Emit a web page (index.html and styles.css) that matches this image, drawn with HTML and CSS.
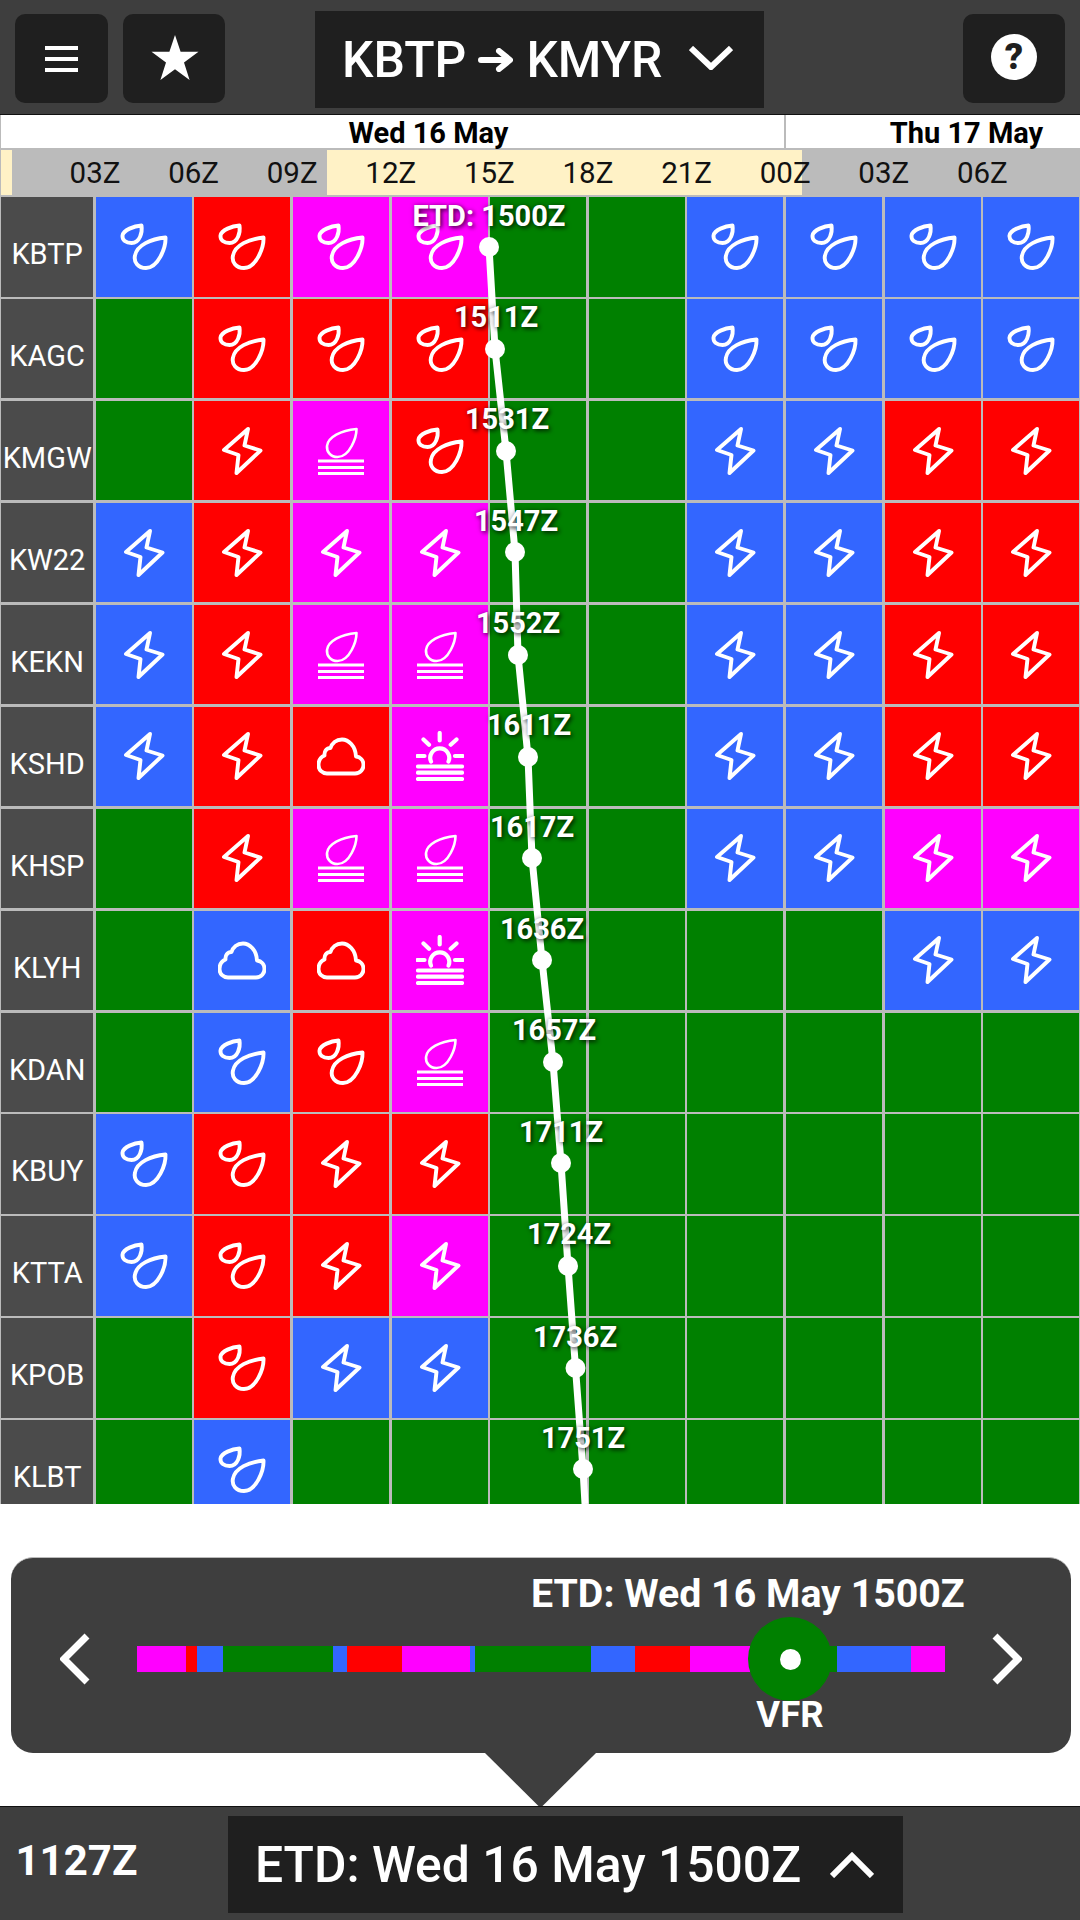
FILE: index.html
```html
<!DOCTYPE html>
<html lang="en">
<head>
<meta charset="utf-8">
<title>KBTP to KMYR</title>
<link rel="stylesheet" href="styles.css">
</head>
<body>
<svg class="defs" width="0" height="0" aria-hidden="true">
  <symbol id="rain" viewBox="0 0 48 48">
    <path class="ln" d="M45.5 14.5C46 25 38 45 26 45C18 45 13.5 39 15 32.5C17 22 31 16 45.5 14.5Z"/>
    <path class="ln" d="M21.5 2.5C22.5 9 20 20 11.5 20C6 20 2 17 2.5 12.5C3.5 7 14 3 21.5 2.5Z"/>
  </symbol>
  <symbol id="bolt" viewBox="0 0 48 48">
    <path class="ln" d="M30 2L6 23L20.5 28L18.5 46L42.5 23.5L26.5 18.5Z"/>
  </symbol>
  <symbol id="fog" viewBox="0 0 48 48">
    <path class="ln thin" d="M39.5 2C39.5 10 33 30 20.5 30C13.5 30 9.5 24.5 10 19C11 10 24 3.5 39.5 2Z"/>
    <path class="ln flat" d="M1 34H47M1 40.5H47M1 46.5H47"/>
  </symbol>
  <symbol id="cloud" viewBox="0 0 48 48">
    <path class="ln" d="M10 41.5H38C43.5 41.5 46.5 37 46.5 33C46.5 28.5 43.5 25 39 24.5C38.5 14 31.5 7.5 25 7.5C19 7.5 15 11.5 13.5 16C9.5 16 7 19.5 7.5 23.5C4 25 1.5 28.5 1.5 33C1.5 38 5.5 41.5 10 41.5Z"/>
  </symbol>
  <symbol id="sun" viewBox="0 0 48 50">
    <path class="ln wide" d="M23.7 2V9.5M7.5 8.5L13 13.7M40.5 8.5L34.7 13.7M1.5 25H8.5M39 25H46.5"/>
    <path class="ln wide" d="M15 30.5A9.5 9.5 0 1 1 32.5 30.5"/>
    <path class="ln wide" d="M2 35.5H46M2 41.7H46M2 48H46"/>
  </symbol>
</svg>

<div class="page">
  <header class="top">
    <button class="tile" type="button" aria-label="Menu">
      <svg class="menu-ic" viewBox="0 0 33 26"><path d="M0 2H33M0 13H33M0 24H33"/></svg>
    </button>
    <button class="tile star-tile" type="button" aria-label="Favourites">
      <svg class="star-ic" viewBox="0 0 48 45"><path d="M24 0L29.6 16.8H47.5L33 27.4L38.6 45L24 34.2L9.4 45L15 27.4L.5 16.8H18.4Z"/></svg>
    </button>
    <button class="route" type="button">
      <span>KBTP</span>
      <svg class="arrow" viewBox="0 0 35 24"><path d="M3 12H31M21 3L32 12L21 21"/></svg>
      <span>KMYR</span>
      <svg class="chev-down" viewBox="0 0 44 24"><path d="M2 2L22 21L42 2"/></svg>
    </button>
    <button class="tile help-tile" type="button" aria-label="Help"><span class="help">?</span></button>
  </header>

  <div class="dates">
    <div class="day day-a">Wed 16 May</div>
    <div class="day day-b">Thu 17 May</div>
  </div>

  <div class="hours">
    <span>03Z</span><span>06Z</span><span>09Z</span><span>12Z</span><span>15Z</span><span>18Z</span><span>21Z</span><span>00Z</span><span>03Z</span><span>06Z</span>
  </div>

  <div class="board">
    <div class="grid">
      <div class="st">KBTP</div>
      <div class="c b"><svg class="ic"><use href="#rain"/></svg></div><div class="c r"><svg class="ic"><use href="#rain"/></svg></div><div class="c m"><svg class="ic"><use href="#rain"/></svg></div><div class="c m"><svg class="ic"><use href="#rain"/></svg></div><div class="c g"></div><div class="c g"></div><div class="c b"><svg class="ic"><use href="#rain"/></svg></div><div class="c b"><svg class="ic"><use href="#rain"/></svg></div><div class="c b"><svg class="ic"><use href="#rain"/></svg></div><div class="c b"><svg class="ic"><use href="#rain"/></svg></div>
      <div class="st">KAGC</div>
      <div class="c g"></div><div class="c r"><svg class="ic"><use href="#rain"/></svg></div><div class="c r"><svg class="ic"><use href="#rain"/></svg></div><div class="c r"><svg class="ic"><use href="#rain"/></svg></div><div class="c g"></div><div class="c g"></div><div class="c b"><svg class="ic"><use href="#rain"/></svg></div><div class="c b"><svg class="ic"><use href="#rain"/></svg></div><div class="c b"><svg class="ic"><use href="#rain"/></svg></div><div class="c b"><svg class="ic"><use href="#rain"/></svg></div>
      <div class="st">KMGW</div>
      <div class="c g"></div><div class="c r"><svg class="ic"><use href="#bolt"/></svg></div><div class="c m"><svg class="ic"><use href="#fog"/></svg></div><div class="c r"><svg class="ic"><use href="#rain"/></svg></div><div class="c g"></div><div class="c g"></div><div class="c b"><svg class="ic"><use href="#bolt"/></svg></div><div class="c b"><svg class="ic"><use href="#bolt"/></svg></div><div class="c r"><svg class="ic"><use href="#bolt"/></svg></div><div class="c r"><svg class="ic"><use href="#bolt"/></svg></div>
      <div class="st">KW22</div>
      <div class="c b"><svg class="ic"><use href="#bolt"/></svg></div><div class="c r"><svg class="ic"><use href="#bolt"/></svg></div><div class="c m"><svg class="ic"><use href="#bolt"/></svg></div><div class="c m"><svg class="ic"><use href="#bolt"/></svg></div><div class="c g"></div><div class="c g"></div><div class="c b"><svg class="ic"><use href="#bolt"/></svg></div><div class="c b"><svg class="ic"><use href="#bolt"/></svg></div><div class="c r"><svg class="ic"><use href="#bolt"/></svg></div><div class="c r"><svg class="ic"><use href="#bolt"/></svg></div>
      <div class="st">KEKN</div>
      <div class="c b"><svg class="ic"><use href="#bolt"/></svg></div><div class="c r"><svg class="ic"><use href="#bolt"/></svg></div><div class="c m"><svg class="ic"><use href="#fog"/></svg></div><div class="c m"><svg class="ic"><use href="#fog"/></svg></div><div class="c g"></div><div class="c g"></div><div class="c b"><svg class="ic"><use href="#bolt"/></svg></div><div class="c b"><svg class="ic"><use href="#bolt"/></svg></div><div class="c r"><svg class="ic"><use href="#bolt"/></svg></div><div class="c r"><svg class="ic"><use href="#bolt"/></svg></div>
      <div class="st">KSHD</div>
      <div class="c b"><svg class="ic"><use href="#bolt"/></svg></div><div class="c r"><svg class="ic"><use href="#bolt"/></svg></div><div class="c r"><svg class="ic"><use href="#cloud"/></svg></div><div class="c m"><svg class="ic sun-ic"><use href="#sun"/></svg></div><div class="c g"></div><div class="c g"></div><div class="c b"><svg class="ic"><use href="#bolt"/></svg></div><div class="c b"><svg class="ic"><use href="#bolt"/></svg></div><div class="c r"><svg class="ic"><use href="#bolt"/></svg></div><div class="c r"><svg class="ic"><use href="#bolt"/></svg></div>
      <div class="st">KHSP</div>
      <div class="c g"></div><div class="c r"><svg class="ic"><use href="#bolt"/></svg></div><div class="c m"><svg class="ic"><use href="#fog"/></svg></div><div class="c m"><svg class="ic"><use href="#fog"/></svg></div><div class="c g"></div><div class="c g"></div><div class="c b"><svg class="ic"><use href="#bolt"/></svg></div><div class="c b"><svg class="ic"><use href="#bolt"/></svg></div><div class="c m"><svg class="ic"><use href="#bolt"/></svg></div><div class="c m"><svg class="ic"><use href="#bolt"/></svg></div>
      <div class="st">KLYH</div>
      <div class="c g"></div><div class="c b"><svg class="ic"><use href="#cloud"/></svg></div><div class="c r"><svg class="ic"><use href="#cloud"/></svg></div><div class="c m"><svg class="ic sun-ic"><use href="#sun"/></svg></div><div class="c g"></div><div class="c g"></div><div class="c g"></div><div class="c g"></div><div class="c b"><svg class="ic"><use href="#bolt"/></svg></div><div class="c b"><svg class="ic"><use href="#bolt"/></svg></div>
      <div class="st">KDAN</div>
      <div class="c g"></div><div class="c b"><svg class="ic"><use href="#rain"/></svg></div><div class="c r"><svg class="ic"><use href="#rain"/></svg></div><div class="c m"><svg class="ic"><use href="#fog"/></svg></div><div class="c g"></div><div class="c g"></div><div class="c g"></div><div class="c g"></div><div class="c g"></div><div class="c g"></div>
      <div class="st">KBUY</div>
      <div class="c b"><svg class="ic"><use href="#rain"/></svg></div><div class="c r"><svg class="ic"><use href="#rain"/></svg></div><div class="c r"><svg class="ic"><use href="#bolt"/></svg></div><div class="c r"><svg class="ic"><use href="#bolt"/></svg></div><div class="c g"></div><div class="c g"></div><div class="c g"></div><div class="c g"></div><div class="c g"></div><div class="c g"></div>
      <div class="st">KTTA</div>
      <div class="c b"><svg class="ic"><use href="#rain"/></svg></div><div class="c r"><svg class="ic"><use href="#rain"/></svg></div><div class="c r"><svg class="ic"><use href="#bolt"/></svg></div><div class="c m"><svg class="ic"><use href="#bolt"/></svg></div><div class="c g"></div><div class="c g"></div><div class="c g"></div><div class="c g"></div><div class="c g"></div><div class="c g"></div>
      <div class="st">KPOB</div>
      <div class="c g"></div><div class="c r"><svg class="ic"><use href="#rain"/></svg></div><div class="c b"><svg class="ic"><use href="#bolt"/></svg></div><div class="c b"><svg class="ic"><use href="#bolt"/></svg></div><div class="c g"></div><div class="c g"></div><div class="c g"></div><div class="c g"></div><div class="c g"></div><div class="c g"></div>
      <div class="st">KLBT</div>
      <div class="c g"></div><div class="c b"><svg class="ic"><use href="#rain"/></svg></div><div class="c g"></div><div class="c g"></div><div class="c g"></div><div class="c g"></div><div class="c g"></div><div class="c g"></div><div class="c g"></div><div class="c g"></div>
    </div>

    <svg class="track" viewBox="0 195 1080 1309">
      <polyline points="489,247 495,349 506,451 515,552 518,655 528,757 532,858 542,960 553,1062 561,1163 568,1266 575.5,1368 583,1469 585,1504"/>
      <circle cx="489" cy="247" r="10"/><circle cx="495" cy="349" r="10"/><circle cx="506" cy="451" r="10"/><circle cx="515" cy="552" r="10"/><circle cx="518" cy="655" r="10"/><circle cx="528" cy="757" r="10"/><circle cx="532" cy="858" r="10"/><circle cx="542" cy="960" r="10"/><circle cx="553" cy="1062" r="10"/><circle cx="561" cy="1163" r="10"/><circle cx="568" cy="1266" r="10"/><circle cx="575.5" cy="1368" r="10"/><circle cx="583" cy="1469" r="10"/>
    </svg>
    <div class="eta" style="left:489px;top:6px">ETD: 1500Z</div>
    <div class="eta" style="left:496px;top:107px">1511Z</div>
    <div class="eta" style="left:507px;top:209px">1531Z</div>
    <div class="eta" style="left:516px;top:311px">1547Z</div>
    <div class="eta" style="left:518px;top:413px">1552Z</div>
    <div class="eta" style="left:529px;top:515px">1611Z</div>
    <div class="eta" style="left:532px;top:617px">1617Z</div>
    <div class="eta" style="left:542px;top:719px">1636Z</div>
    <div class="eta" style="left:554px;top:820px">1657Z</div>
    <div class="eta" style="left:561px;top:922px">1711Z</div>
    <div class="eta" style="left:569px;top:1024px">1724Z</div>
    <div class="eta" style="left:575px;top:1127px">1736Z</div>
    <div class="eta" style="left:583px;top:1228px">1751Z</div>
  </div>

  <main class="middle">
    <section class="panel">
      <h2 class="panel-title">ETD: Wed 16 May 1500Z</h2>
      <div class="scrub">
        <svg class="chev-side" viewBox="0 0 30 52"><path d="M27 3L4 26L27 49"/></svg>
        <div class="bar">
          <i class="m" style="width:49px"></i><i class="r" style="width:11px"></i><i class="b" style="width:26px"></i><i class="g" style="width:110px"></i><i class="b" style="width:14px"></i><i class="r" style="width:55px"></i><i class="m" style="width:68px"></i><i class="b" style="width:5px"></i><i class="g" style="width:116px"></i><i class="b" style="width:44px"></i><i class="r" style="width:55px"></i><i class="m" style="width:60px"></i><i class="g" style="width:87px"></i><i class="b" style="width:74px"></i><i class="m" style="width:34px"></i>
          <div class="marker"><span class="pip"></span><span class="cat">VFR</span></div>
        </div>
        <svg class="chev-side" viewBox="0 0 30 52"><path d="M3 3L26 26L3 49"/></svg>
      </div>
      <div class="tail"></div>
    </section>
  </main>

  <footer class="bottom">
    <div class="clock">1127Z</div>
    <button class="etd" type="button">
      <span>ETD: Wed 16 May 1500Z</span>
      <svg class="chev-up" viewBox="0 0 44 26"><path d="M2 24L22 4L42 24"/></svg>
    </button>
  </footer>
</div>
</body>
</html>
```

FILE: styles.css
```css
* { box-sizing: border-box; }
html, body { margin: 0; padding: 0; }
body {
  width: 1080px;
  height: 1920px;
  overflow: hidden;
  background: #fff;
  font-family: Roboto, "Liberation Sans", sans-serif;
}
.defs { position: absolute; }
button { font-family: inherit; border: 0; padding: 0; color: #fff; }

.page { display: flex; flex-direction: column; height: 1920px; }

.top {
  height: 115px;
  flex: none;
  display: flex;
  align-items: flex-start;
  background: #3e3e3e;
  border-bottom: 1px solid #111;
  padding: 11px 15px 0 15px;
}
.tile {
  width: 93px;
  height: 89px;
  margin-top: 3px;
  background: #1f1f1f;
  border-radius: 10px;
  display: flex;
  align-items: center;
  justify-content: center;
}
.star-tile { width: 102px; margin-left: 15px; }
.help-tile { width: 102px; margin-left: auto; }
.menu-ic { width: 33px; height: 26px; stroke: #fff; stroke-width: 4; fill: none; }
.star-ic { width: 48px; height: 45px; fill: #fff; margin: -2px 0 0 2px; }
.help {
  width: 46px;
  height: 46px;
  margin-top: -3px;
  border-radius: 50%;
  background: #fff;
  color: #1f1f1f;
  font-size: 36px;
  font-weight: 900;
  line-height: 46px;
  text-align: center;
}
.route {
  width: 449px;
  height: 97px;
  margin-left: 90px;
  padding-left: 27px;
  background: #1f1f1f;
  display: flex;
  align-items: center;
  font-size: 49.8px;
  font-weight: 500;
}
.arrow { width: 35px; height: 24px; margin: 0 13px 0 12px; stroke: #fff; stroke-width: 6; stroke-linecap: round; stroke-linejoin: round; fill: none; }
.chev-down { width: 44px; height: 24px; margin-left: 27px; margin-top: -3px; stroke: #fff; stroke-width: 6; fill: none; }

.dates {
  height: 35px;
  flex: none;
  display: flex;
  border-left: 1px solid #bbb;
  border-bottom: 2px solid #bbb;
  font-size: 29px;
  font-weight: 700;
  color: #000;
  background: #fff;
}
.day { display: flex; align-items: center; justify-content: center; line-height: 33px; padding-top: 3px; }
.day-a { width: 785px; flex: none; padding-left: 72px; border-right: 2px solid #bbb; }
.day-b { flex: 1; padding-left: 67px; }

.hours {
  height: 45px;
  flex: none;
  display: flex;
  padding-left: 45.7px;
  background: linear-gradient(to right, #bbb 0 1px, #fff2c6 1px 12px, #bbb 12px 327px, #fff2c6 327px 802px, #bbb 802px);
  font-size: 29.5px;
  color: #111;
}
.hours span { width: 98.6px; flex: none; text-align: center; line-height: 46px; }

.board {
  position: relative;
  height: 1309px;
  flex: none;
  overflow: hidden;
  background: #bbb;
}
.grid {
  display: grid;
  grid-template-columns: 92.3px repeat(10, 96.1px);
  grid-auto-rows: 99.5px;
  gap: 2.45px 2.5px;
  padding: 2px 0 0 1px;
}
.st {
  background: #4b4b4b;
  color: #fff;
  font-size: 29px;
  text-align: center;
  line-height: 114px;
  white-space: nowrap;
}
.c { display: flex; align-items: center; justify-content: center; }
.b { background: #3366ff; }
.r { background: #ff0000; }
.m { background: #ff00ff; }
.g { background: #008000; }
.ic { width: 48px; height: 48px; }
.sun-ic { height: 50px; }
.ln { fill: none; stroke: #fff; stroke-width: 3.9; stroke-linejoin: round; stroke-linecap: round; }
.thin { stroke-width: 2.6; }
.flat { stroke-width: 3; stroke-linecap: butt; }
.wide { stroke-width: 4.2; }

.track { position: absolute; left: 0; top: 0; width: 1080px; height: 1309px; }
.track polyline { fill: none; stroke: #fff; stroke-width: 7; }
.track circle { fill: #fff; }
.eta {
  position: absolute;
  transform: translateX(-50%);
  color: #fff;
  font-size: 29px;
  font-weight: 700;
  line-height: 30px;
  white-space: nowrap;
  text-shadow: 2px 2px 4px rgba(0, 0, 0, .6), 0 0 5px rgba(0, 0, 0, .35);
}

.middle { flex: 1; padding: 53px 9.5px 0 11px; background: #fff; }
.panel {
  position: relative;
  height: 196px;
  background: #3e3e3e;
  border-top: 1px solid #bbb;
  border-radius: 22px;
  color: #fff;
}
.panel-title {
  margin: 0 0 0 520px;
  padding-top: 14px;
  font-size: 39.3px;
  font-weight: 700;
  line-height: 44px;
  white-space: nowrap;
}
.scrub {
  display: flex;
  align-items: center;
  margin-top: 17px;
  padding-left: 49px;
  gap: 47px;
}
.chev-side { width: 30px; height: 52px; flex: none; stroke: #fff; stroke-width: 7; fill: none; }
.bar { position: relative; width: 808px; height: 26px; flex: none; display: flex; }
.bar i { display: block; height: 26px; flex: none; }
.marker {
  position: absolute;
  left: 611px;
  top: -29px;
  width: 84px;
  height: 84px;
  border-radius: 50%;
  background: #008000;
  display: flex;
  align-items: center;
  justify-content: center;
}
.pip { width: 21px; height: 21px; border-radius: 50%; background: #fff; }
.cat {
  position: absolute;
  top: 78px;
  left: 50%;
  transform: translateX(-50%);
  font-size: 36.5px;
  font-weight: 700;
  line-height: 40px;
}
.tail {
  position: absolute;
  left: 474px;
  top: 195px;
  width: 111px;
  height: 55px;
  background: #3e3e3e;
  clip-path: polygon(0 0, 100% 0, 50% 100%);
}

.bottom {
  position: relative;
  height: 114px;
  flex: none;
  display: flex;
  align-items: flex-start;
  background: #3e3e3e;
  border-top: 1px solid #111;
  padding-top: 9px;
}
.clock {
  width: 228px;
  flex: none;
  padding-left: 15.5px;
  font-size: 42px;
  font-weight: 700;
  line-height: 70px;
  margin-top: 10px;
  color: #fff;
}
.etd {
  width: 675px;
  height: 97px;
  padding-left: 27px;
  background: #1f1f1f;
  display: flex;
  align-items: center;
  font-size: 49.8px;
  font-weight: 500;
  white-space: nowrap;
}
.chev-up { width: 44px; height: 26px; margin-left: 29px; stroke: #fff; stroke-width: 6; fill: none; }
```
